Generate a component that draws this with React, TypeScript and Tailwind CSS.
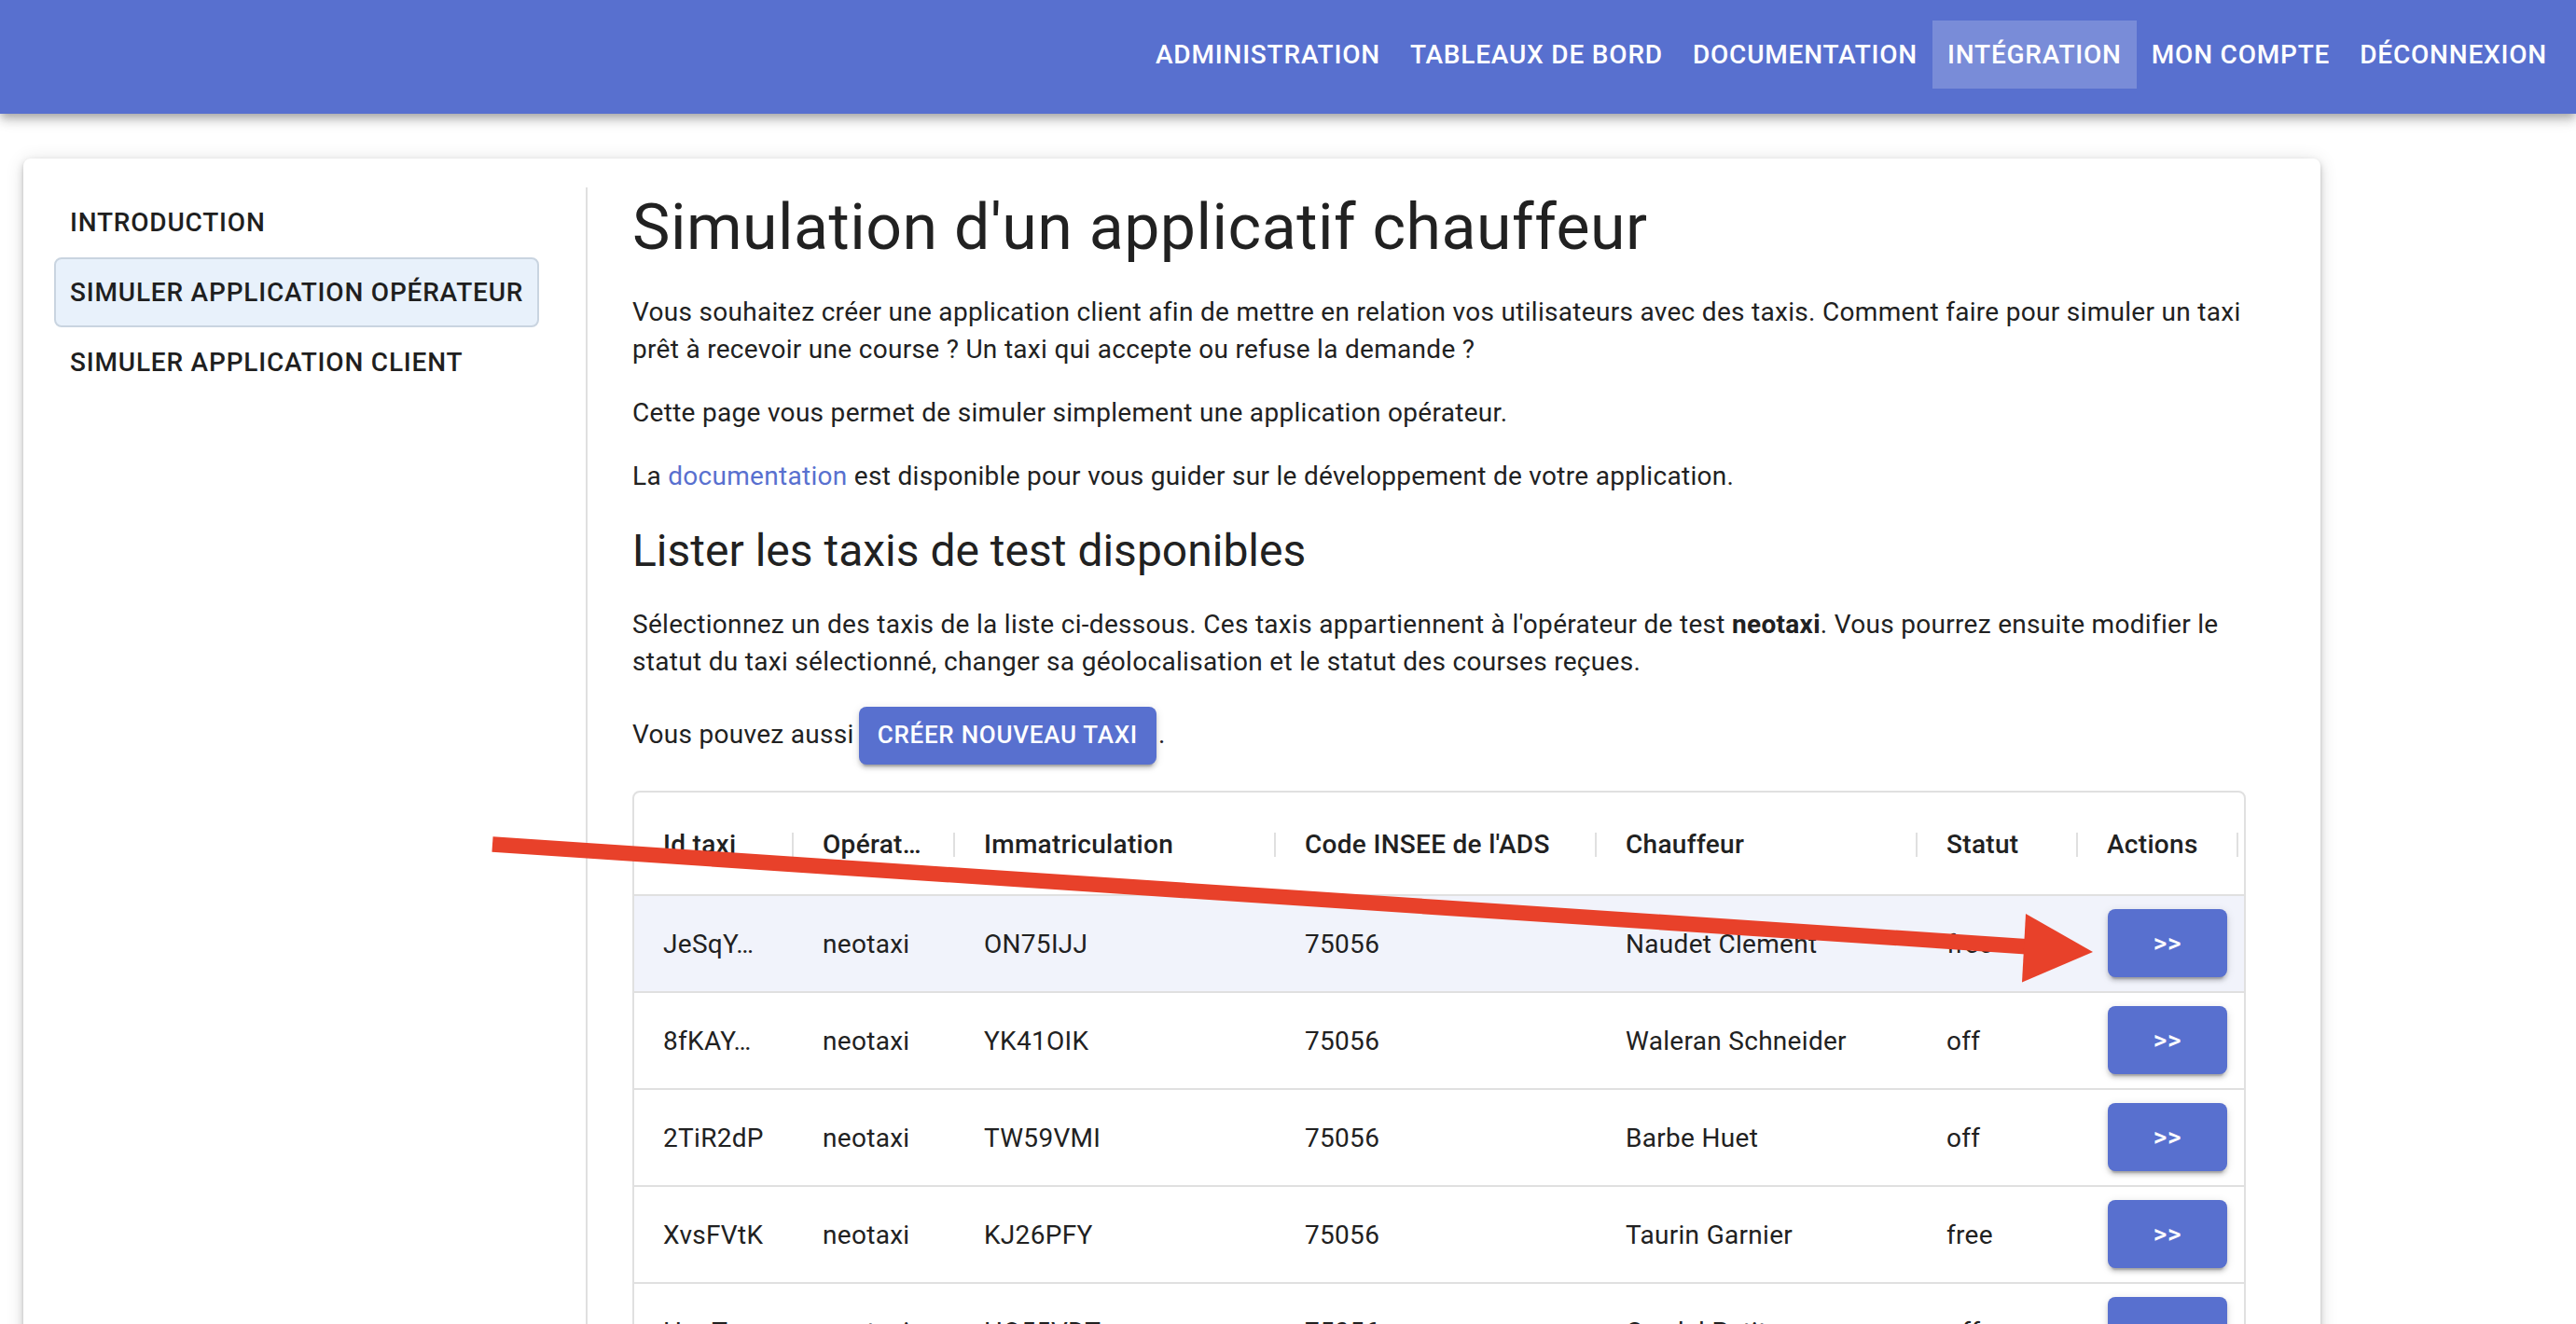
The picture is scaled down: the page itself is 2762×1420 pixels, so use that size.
import React from "react";

const navItems = [
  { label: "Administration", active: false },
  { label: "Tableaux de bord", active: false },
  { label: "Documentation", active: false },
  { label: "Intégration", active: true },
  { label: "Mon compte", active: false },
  { label: "Déconnexion", active: false },
];

const sideItems = [
  { label: "Introduction", active: false },
  { label: "Simuler application opérateur", active: true },
  { label: "Simuler application client", active: false },
];

const columns = [
  { label: "Id taxi", w: "w-[171px]" },
  { label: "Opérat…", w: "w-[173px]" },
  { label: "Immatriculation", w: "w-[344px]" },
  { label: "Code INSEE de l'ADS", w: "w-[344px]" },
  { label: "Chauffeur", w: "w-[344px]" },
  { label: "Statut", w: "w-[172px]" },
  { label: "Actions", w: "w-[172px]" },
];

const rows = [
  { id: "JeSqY…", op: "neotaxi", imm: "ON75IJJ", insee: "75056", driver: "Naudet Clement", status: "free", selected: true },
  { id: "8fKAY…", op: "neotaxi", imm: "YK41OIK", insee: "75056", driver: "Waleran Schneider", status: "off", selected: false },
  { id: "2TiR2dP", op: "neotaxi", imm: "TW59VMI", insee: "75056", driver: "Barbe Huet", status: "off", selected: false },
  { id: "XvsFVtK", op: "neotaxi", imm: "KJ26PFY", insee: "75056", driver: "Taurin Garnier", status: "free", selected: false },
  { id: "HuqTx…", op: "neotaxi", imm: "HO55VDT", insee: "75056", driver: "Ceydel Petit", status: "off", selected: false },
  { id: "Pq8Lm…", op: "neotaxi", imm: "GB12KLO", insee: "75056", driver: "Martin Durand", status: "free", selected: false },
];

export default function App() {
  return (
    <div className="relative min-h-screen bg-white font-['Roboto','Liberation_Sans',sans-serif] text-[#212121]">
      <header className="relative z-10 flex h-[122px] items-start justify-end bg-[#5870cf] pr-[15px] pt-[22px] shadow-[0_4px_8px_-2px_rgba(0,0,0,0.2),0_8px_10px_0_rgba(0,0,0,0.14),0_2px_20px_0_rgba(0,0,0,0.12)]">
        {navItems.map((n) => (
          <div
            key={n.label}
            className={`flex h-[73px] items-center px-[16px] text-[28px] font-medium uppercase tracking-[0.8px] text-white ${
              n.active ? "bg-white/20" : ""
            }`}
          >
            {n.label}
          </div>
        ))}
      </header>

      <div className="pl-[25px] pt-[48px]">
        <div className="flex w-[2463px] rounded-lg bg-white pb-[40px] pl-[33px] pr-[80px] pt-[31px] shadow-[0_2px_4px_-1px_rgba(0,0,0,0.2),0_4px_10px_0_rgba(0,0,0,0.14),0_2px_20px_0_rgba(0,0,0,0.12)]">
          <nav className="flex w-[520px] shrink-0 flex-col">
            {sideItems.map((s) => (
              <div
                key={s.label}
                className={`flex h-[75px] items-center rounded-lg border-2 pl-[15px] text-[28px] font-medium uppercase tracking-[0.8px] text-[#1f1f1f] ${
                  s.active ? "border-[#c9d4e0] bg-[#e8f1fb]" : "border-transparent"
                }`}
              >
                {s.label}
              </div>
            ))}
          </nav>

          <div className="ml-[50px] w-[2px] shrink-0 bg-[#e0e0e0]" />

          <main className="ml-[48px] w-[1730px] shrink-0 tracking-[0.3px]">
            <h1 className="mb-[28px] text-[68px] font-normal leading-[86px] tracking-[0.5px]">
              Simulation d'un applicatif chauffeur
            </h1>
            <p className="mb-[28px] text-[28px] leading-[40px]">
              Vous souhaitez créer une application client afin de mettre en relation vos utilisateurs avec des taxis. Comment faire pour simuler un taxi prêt à recevoir une course ? Un taxi qui accepte ou refuse la demande ?
            </p>
            <p className="mb-[28px] text-[28px] leading-[40px]">
              Cette page vous permet de simuler simplement une application opérateur.
            </p>
            <p className="mb-[28px] text-[28px] leading-[40px]">
              La <span className="text-[#5870cf]">documentation</span> est disponible pour vous guider sur le développement de votre application.
            </p>
            <h2 className="mb-[27px] text-[48px] font-normal leading-[64px] tracking-normal">
              Lister les taxis de test disponibles
            </h2>
            <p className="mb-[28px] text-[28px] leading-[40px]">
              Sélectionnez un des taxis de la liste ci-dessous. Ces taxis appartiennent à l'opérateur de test{" "}
              <span className="font-bold">neotaxi</span>. Vous pourrez ensuite modifier le statut du taxi sélectionné, changer sa géolocalisation et le statut des courses reçues.
            </p>
            <div className="mb-[28px] flex items-baseline text-[28px] leading-[40px]">
              <span>Vous pouvez aussi</span>
              <span className="ml-[5px] inline-flex items-center rounded-lg bg-[#5870cf] px-[20px] py-[8px] text-[26px] font-medium uppercase leading-[45.5px] tracking-[0.74px] text-white shadow-[0_6px_2px_-4px_rgba(0,0,0,0.2),0_4px_4px_0_rgba(0,0,0,0.14),0_2px_10px_0_rgba(0,0,0,0.12)]">
                Créer nouveau taxi
              </span>
              <span className="ml-[2px]">.</span>
            </div>

            <div className="overflow-hidden rounded-lg border-2 border-[#e0e0e0]">
              <div className="flex h-[111px] items-center border-b-2 border-[#e0e0e0] pt-[3px]">
                {columns.map((c) => (
                  <div key={c.label} className={`flex ${c.w} shrink-0 items-center pl-[31px]`}>
                    <span className="flex-1 truncate text-[28px] font-medium leading-[40px]">{c.label}</span>
                    <div className="h-[26px] w-[2px] shrink-0 bg-[#e0e0e0]" />
                  </div>
                ))}
              </div>
              {rows.map((r) => (
                <div
                  key={r.id}
                  className={`flex h-[104px] items-center border-b-2 border-[#e0e0e0] text-[28px] leading-[40px] ${
                    r.selected ? "bg-[#f1f3fb]" : "bg-white"
                  }`}
                >
                  <div className="w-[171px] shrink-0 pl-[31px] pt-[3px]">{r.id}</div>
                  <div className="w-[173px] shrink-0 pl-[31px] pt-[3px]">{r.op}</div>
                  <div className="w-[344px] shrink-0 pl-[31px] pt-[3px]">{r.imm}</div>
                  <div className="w-[344px] shrink-0 pl-[31px] pt-[3px]">{r.insee}</div>
                  <div className="w-[344px] shrink-0 pl-[31px] pt-[3px]">{r.driver}</div>
                  <div className="w-[172px] shrink-0 pl-[31px] pt-[3px]">{r.status}</div>
                  <div className="w-[172px] shrink-0 pl-[32px]">
                    <span className="flex h-[73px] w-[128px] items-center justify-center rounded-lg bg-[#5870cf] text-[28px] font-medium tracking-[0.8px] text-white shadow-[0_6px_2px_-4px_rgba(0,0,0,0.2),0_4px_4px_0_rgba(0,0,0,0.14),0_2px_10px_0_rgba(0,0,0,0.12)]">
                      &gt;&gt;
                    </span>
                  </div>
                </div>
              ))}
            </div>
          </main>
        </div>
      </div>

      <svg
        className="pointer-events-none absolute left-0 top-0 z-20"
        width="2762"
        height="1420"
        viewBox="0 0 2762 1420"
      >
        <line x1="528" y1="905.5" x2="2180" y2="1015.7" stroke="#e8412a" strokeWidth="16.5" />
        <polygon points="2244,1021 2172,980 2168,1053.5" fill="#e8412a" />
      </svg>
    </div>
  );
}
